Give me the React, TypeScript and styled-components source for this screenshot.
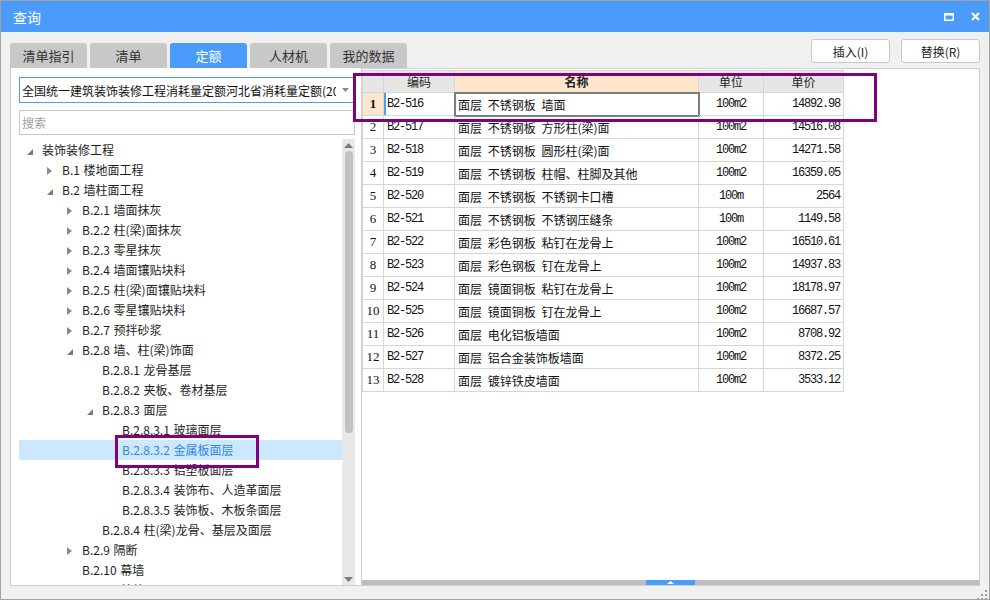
import React from 'react';
import styled, { createGlobalStyle, css } from 'styled-components';

const BLUE = '#4b9cfa';
const GRID = '#d6d6d6';

const GlobalStyle = createGlobalStyle`
  html, body {
    margin: 0;
    padding: 0;
    background: #fff;
  }
  body {
    font-family: "Noto Sans CJK SC", "Noto Sans", sans-serif;
    font-size: 12px;
    color: #222;
  }
  * {
    box-sizing: border-box;
  }
`;

const Window = styled.div`
  position: relative;
  width: 990px;
  height: 600px;
  border: 1px solid #a2a2a2;
  background: #f0f0f0;
  display: flex;
  flex-direction: column;
  overflow: hidden;
`;

const TitleBar = styled.div`
  flex: none;
  height: 31px;
  background: ${BLUE};
  display: flex;
  align-items: center;
  padding: 0 9px 0 12px;
  color: #fff;
`;

const Title = styled.span`
  flex: 1;
  font-size: 14px;
  line-height: 1;
`;

const TitleIcons = styled.div`
  display: flex;
  align-items: center;
  gap: 17px;
`;

const Body = styled.div`
  flex: 1;
  min-height: 0;
  display: flex;
  flex-direction: column;
  padding: 0 9px 13px 9px;
`;

const TopRow = styled.div`
  flex: none;
  height: 36px;
  display: flex;
  align-items: flex-end;
`;

const TabStrip = styled.div`
  display: flex;
  gap: 3px;
`;

const Tab = styled.div<{ $active?: boolean }>`
  width: 77px;
  height: 25px;
  border-radius: 3px 3px 0 0;
  background: ${({ $active }) => ($active ? BLUE : '#c8c8c8')};
  color: ${({ $active }) => ($active ? '#fff' : '#333')};
  font-size: 13px;
  line-height: 25px;
  text-align: center;
`;

const ButtonGroup = styled.div`
  margin-left: auto;
  align-self: flex-start;
  margin-top: 7px;
  display: flex;
  gap: 11px;
`;

const Button = styled.button`
  width: 79px;
  height: 24px;
  padding: 0;
  background: #fff;
  border: 1px solid #c9c9c9;
  border-radius: 3px;
  font-family: "Noto Sans CJK SC", "Noto Sans", sans-serif;
  font-size: 12px;
  color: #222;
`;

const Main = styled.div`
  flex: 1;
  min-height: 0;
  display: flex;
`;

const LeftPanel = styled.div`
  flex: none;
  width: 351px;
  background: #fff;
  border-left: 1px solid #cfcfcf;
  border-bottom: 1px solid #cfcfcf;
  padding: 9px 6px 0 8px;
  display: flex;
  flex-direction: column;
`;

const Combo = styled.div`
  flex: none;
  height: 26px;
  border: 1px solid ${BLUE};
  display: flex;
  align-items: center;
  padding-left: 2px;
`;

const ComboText = styled.span`
  flex: 1;
  white-space: nowrap;
  overflow: hidden;
  color: #111;
`;

const ComboArrow = styled.span`
  flex: none;
  width: 18px;
  display: flex;
  justify-content: center;
`;

const Search = styled.input`
  flex: none;
  margin-top: 7px;
  height: 25px;
  border: 1px solid #c8c8c8;
  padding: 0 2px;
  outline: none;
  font-family: "Noto Sans CJK SC", "Noto Sans", sans-serif;
  font-size: 12px;
  &::placeholder {
    color: #a0a0a0;
  }
`;

const TreeArea = styled.div`
  flex: 1;
  min-height: 0;
  margin-top: 4px;
  display: flex;
`;

const TreeList = styled.div`
  flex: 1;
  overflow: hidden;
  padding-top: 1px;
`;

const TreeRow = styled.div<{ $level: number; $selected?: boolean }>`
  height: 20px;
  display: flex;
  align-items: center;
  padding-left: ${({ $level }) => 8 + $level * 20}px;
  white-space: nowrap;
  color: #1e1e1e;
  word-spacing: 1px;
  ${({ $selected }) =>
    $selected &&
    css`
      background: #cce8ff;
      color: #3386dc;
    `}
`;

const ArrowSlot = styled.span`
  flex: none;
  width: 15px;
  height: 20px;
  display: flex;
  align-items: center;
`;

const TreeLabel = styled.span`
  line-height: 20px;
`;

const VScroll = styled.div`
  flex: none;
  width: 13px;
  background: #e8e8e8;
  display: flex;
  flex-direction: column;
  align-items: center;
`;

const ScrollArrow = styled.div`
  flex: none;
  height: 12px;
  display: flex;
  align-items: center;
  justify-content: center;
`;

const ScrollTrack = styled.div`
  flex: 1;
`;

const Thumb = styled.div`
  width: 8px;
  height: 282px;
  border-radius: 4px;
  background: #c2c2c2;
`;

const RightPanel = styled.div`
  flex: 1;
  min-width: 0;
  background: #fff;
  border: 1px solid #cfcfcf;
  border-bottom: none;
  padding: 1px 0 0 0;
  display: flex;
  flex-direction: column;
`;

const Grid = styled.div`
  flex: 1;
  min-height: 0;
  align-self: flex-start;
`;

const GridBody = styled.div`
  border-left: 1px solid ${GRID};
  border-top: 1px solid ${GRID};
`;

const GridRow = styled.div<{ $header?: boolean }>`
  display: grid;
  grid-template-columns: 21px 71px 244px 65px 80px;
  height: ${({ $header }) => ($header ? 22 : 23)}px;
`;

type Align = 'left' | 'center' | 'right';

const Cell = styled.div<{ $align?: Align; $mono?: boolean; $bg?: string; $bold?: boolean }>`
  border-right: 1px solid ${GRID};
  border-bottom: 1px solid ${GRID};
  display: flex;
  align-items: center;
  justify-content: ${({ $align }) =>
    $align === 'right' ? 'flex-end' : $align === 'center' ? 'center' : 'flex-start'};
  padding: 0 3px;
  white-space: nowrap;
  overflow: hidden;
  background: ${({ $bg }) => $bg || 'transparent'};
  color: #111;
  font-weight: ${({ $bold }) => ($bold ? 700 : 400)};
  word-spacing: 3px;
  ${({ $mono }) =>
    $mono &&
    css`
      font-family: "Liberation Mono", "DejaVu Sans Mono", monospace;
      font-size: 12px;
      letter-spacing: -1.2px;
      word-spacing: 0;
    `}
`;

const HeadCell = styled(Cell)`
  color: #222;
  font-size: 12px;
`;

const FocusCell = styled(Cell)`
  outline: 2px solid #7d7d7d;
  outline-offset: -1px;
`;

const CodeCell = styled(Cell)<{ $marked?: boolean }>`
  ${({ $marked }) =>
    $marked &&
    css`
      box-shadow: inset 2px 0 0 ${BLUE};
    `}
`;

const RowNum = styled(Cell)`
  font-family: "Liberation Serif", "DejaVu Serif", serif;
  font-size: 13px;
  letter-spacing: 0;
  padding: 0;
`;

const Splitter = styled.div`
  flex: none;
  height: 6px;
  background: #bdbdbd;
  border-bottom: 1px solid #d0d0d0;
  display: flex;
`;

const SplitHandle = styled.div`
  margin-left: 284px;
  width: 49px;
  height: 5px;
  background: ${BLUE};
  display: flex;
  justify-content: center;
  align-items: flex-start;
  padding-top: 1px;
`;

const Mark = styled.div`
  position: absolute;
  border: 3px solid #800080;
  pointer-events: none;
`;

const Grip = styled.div`
  position: absolute;
  right: 1px;
  bottom: 1px;
  width: 11px;
  height: 11px;
`;

type TreeItem = { level: number; label: string; state: 'open' | 'closed' | 'leaf'; selected?: boolean };

const tree: TreeItem[] = [
  { level: 0, label: '装饰装修工程', state: 'open' },
  { level: 1, label: 'B.1 楼地面工程', state: 'closed' },
  { level: 1, label: 'B.2 墙柱面工程', state: 'open' },
  { level: 2, label: 'B.2.1 墙面抹灰', state: 'closed' },
  { level: 2, label: 'B.2.2 柱(梁)面抹灰', state: 'closed' },
  { level: 2, label: 'B.2.3 零星抹灰', state: 'closed' },
  { level: 2, label: 'B.2.4 墙面镶贴块料', state: 'closed' },
  { level: 2, label: 'B.2.5 柱(梁)面镶贴块料', state: 'closed' },
  { level: 2, label: 'B.2.6 零星镶贴块料', state: 'closed' },
  { level: 2, label: 'B.2.7 预拌砂浆', state: 'closed' },
  { level: 2, label: 'B.2.8 墙、柱(梁)饰面', state: 'open' },
  { level: 3, label: 'B.2.8.1 龙骨基层', state: 'leaf' },
  { level: 3, label: 'B.2.8.2 夹板、卷材基层', state: 'leaf' },
  { level: 3, label: 'B.2.8.3 面层', state: 'open' },
  { level: 4, label: 'B.2.8.3.1 玻璃面层', state: 'leaf' },
  { level: 4, label: 'B.2.8.3.2 金属板面层', state: 'leaf', selected: true },
  { level: 4, label: 'B.2.8.3.3 铝塑板面层', state: 'leaf' },
  { level: 4, label: 'B.2.8.3.4 装饰布、人造革面层', state: 'leaf' },
  { level: 4, label: 'B.2.8.3.5 装饰板、木板条面层', state: 'leaf' },
  { level: 3, label: 'B.2.8.4 柱(梁)龙骨、基层及面层', state: 'leaf' },
  { level: 2, label: 'B.2.9 隔断', state: 'closed' },
  { level: 2, label: 'B.2.10 幕墙', state: 'leaf' },
  { level: 2, label: 'B.2.11 其他', state: 'leaf' },
];

const rows = [
  ['B2-516', '面层 不锈钢板 墙面', '100m2', '14892.98'],
  ['B2-517', '面层 不锈钢板 方形柱(梁)面', '100m2', '14516.08'],
  ['B2-518', '面层 不锈钢板 圆形柱(梁)面', '100m2', '14271.58'],
  ['B2-519', '面层 不锈钢板 柱帽、柱脚及其他', '100m2', '16359.05'],
  ['B2-520', '面层 不锈钢板 不锈钢卡口槽', '100m', '2564'],
  ['B2-521', '面层 不锈钢板 不锈钢压缝条', '100m', '1149.58'],
  ['B2-522', '面层 彩色钢板 粘钉在龙骨上', '100m2', '16510.61'],
  ['B2-523', '面层 彩色钢板 钉在龙骨上', '100m2', '14937.83'],
  ['B2-524', '面层 镜面铜板 粘钉在龙骨上', '100m2', '18178.97'],
  ['B2-525', '面层 镜面铜板 钉在龙骨上', '100m2', '16687.57'],
  ['B2-526', '面层 电化铝板墙面', '100m2', '8708.92'],
  ['B2-527', '面层 铝合金装饰板墙面', '100m2', '8372.25'],
  ['B2-528', '面层 镀锌铁皮墙面', '100m2', '3533.12'],
];

const TreeArrow = ({ state }: { state: TreeItem['state'] }) => {
  if (state === 'open') {
    return (
      <svg width="6" height="6" viewBox="0 0 6 6" style={{ marginTop: 3 }}>
        <polygon points="6,0 6,6 0,6" fill="#7a7a7a" />
      </svg>
    );
  }
  if (state === 'closed') {
    return (
      <svg width="5" height="8" viewBox="0 0 5 8" style={{ marginTop: 1 }}>
        <polygon points="0,0 5,4 0,8" fill="#8a8a8a" />
      </svg>
    );
  }
  return null;
};

export default function App() {
  return (
    <>
      <GlobalStyle />
      <Window>
        <TitleBar>
          <Title>查询</Title>
          <TitleIcons>
            <svg width="10" height="8" viewBox="0 0 10 8">
              <path d="M0 0h10v8H0z M1.5 2.5v4h7v-4z" fill="#fff" fillRule="evenodd" />
            </svg>
            <svg width="9" height="9" viewBox="0 0 9 9">
              <path d="M1 1l7 7M8 1L1 8" stroke="#fff" strokeWidth="2" />
            </svg>
          </TitleIcons>
        </TitleBar>
        <Body>
          <TopRow>
            <TabStrip>
              <Tab>清单指引</Tab>
              <Tab>清单</Tab>
              <Tab $active>定额</Tab>
              <Tab>人材机</Tab>
              <Tab>我的数据</Tab>
            </TabStrip>
            <ButtonGroup>
              <Button>插入(I)</Button>
              <Button>替换(R)</Button>
            </ButtonGroup>
          </TopRow>
          <Main>
            <LeftPanel>
              <Combo>
                <ComboText>全国统一建筑装饰装修工程消耗量定额河北省消耗量定额(2012)</ComboText>
                <ComboArrow>
                  <svg width="7" height="4" viewBox="0 0 7 4">
                    <polygon points="0,0 7,0 3.5,4" fill="#888" />
                  </svg>
                </ComboArrow>
              </Combo>
              <Search placeholder="搜索" />
              <TreeArea>
                <TreeList>
                  {tree.map((t) => (
                    <TreeRow key={t.label} $level={t.level} $selected={t.selected}>
                      <ArrowSlot>
                        <TreeArrow state={t.state} />
                      </ArrowSlot>
                      <TreeLabel>{t.label}</TreeLabel>
                    </TreeRow>
                  ))}
                </TreeList>
                <VScroll>
                  <ScrollArrow>
                    <svg width="9" height="5" viewBox="0 0 9 5">
                      <polygon points="4.5,0 9,5 0,5" fill="#7a7a7a" />
                    </svg>
                  </ScrollArrow>
                  <ScrollTrack>
                    <Thumb />
                  </ScrollTrack>
                  <ScrollArrow>
                    <svg width="9" height="5" viewBox="0 0 9 5">
                      <polygon points="0,0 9,0 4.5,5" fill="#7a7a7a" />
                    </svg>
                  </ScrollArrow>
                </VScroll>
              </TreeArea>
            </LeftPanel>
            <RightPanel>
              <Grid>
                <GridBody>
                  <GridRow $header>
                    <HeadCell $bg="#e6e6e6" />
                    <HeadCell $bg="#e6e6e6" $align="center">编码</HeadCell>
                    <HeadCell $bg="#fde7cc" $align="center" $bold>名称</HeadCell>
                    <HeadCell $bg="#e6e6e6" $align="center">单位</HeadCell>
                    <HeadCell $bg="#e6e6e6" $align="center">单价</HeadCell>
                  </GridRow>
                  {rows.map((r, i) => {
                    const first = i === 0;
                    const NameCell = first ? FocusCell : Cell;
                    return (
                      <GridRow key={r[0]}>
                        <RowNum $align="center" $bg={first ? '#fde7cc' : undefined} $bold={first}>
                          {i + 1}
                        </RowNum>
                        <CodeCell $mono $marked={first}>{r[0]}</CodeCell>
                        <NameCell>{r[1]}</NameCell>
                        <Cell $mono $align="center">{r[2]}</Cell>
                        <Cell $mono $align="right">{r[3]}</Cell>
                      </GridRow>
                    );
                  })}
                </GridBody>
              </Grid>
              <Splitter>
                <SplitHandle>
                  <svg width="7" height="3" viewBox="0 0 7 3">
                    <polygon points="3.5,0 7,3 0,3" fill="#fff" />
                  </svg>
                </SplitHandle>
              </Splitter>
            </RightPanel>
          </Main>
        </Body>
        <Mark style={{ left: 352, top: 72, width: 524, height: 49 }} />
        <Mark style={{ left: 114, top: 434, width: 144, height: 33 }} />
        <Grip>
          <svg width="11" height="11" viewBox="0 0 11 11">
            <g fill="#9a9a9a">
              <rect x="8" y="0" width="2" height="2" />
              <rect x="4" y="4" width="2" height="2" />
              <rect x="8" y="4" width="2" height="2" />
              <rect x="0" y="8" width="2" height="2" />
              <rect x="4" y="8" width="2" height="2" />
              <rect x="8" y="8" width="2" height="2" />
            </g>
          </svg>
        </Grip>
      </Window>
    </>
  );
}
